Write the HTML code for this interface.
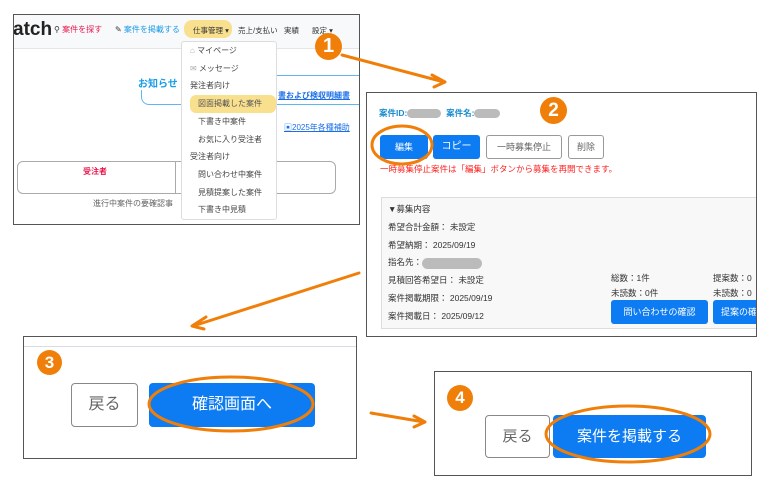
<!DOCTYPE html>
<html><head><meta charset="utf-8"><style>
*{margin:0;padding:0;box-sizing:border-box}
body{width:770px;height:500px;background:#fff;position:relative;overflow:hidden;font-family:"Liberation Sans","Noto Sans CJK JP",sans-serif;color:#333}
.a{position:absolute;white-space:nowrap}
.p{position:absolute;border:1px solid #555;background:#fff;overflow:hidden}
.btn{position:absolute;border-radius:3px;text-align:center;white-space:nowrap}
.blue{background:#0d7bf2;color:#fff}
.gray{border:1px solid #999;color:#666;background:#fff}
.num{position:absolute;border-radius:50%;background:#f07f0a;color:#fff;font-weight:bold;text-align:center;font-family:"Liberation Sans",sans-serif}
.blur{display:inline-block;background:#bbb;border-radius:6px;vertical-align:middle}
</style></head><body>

<!-- Panel 1 -->
<div class="p" style="left:13px;top:14px;width:347px;height:211px">
  <div class="a" style="left:0;top:0;width:347px;height:34px;background:#f8f9fa;border-bottom:1px solid #e5e5e5"></div>
  <div class="a" style="left:-1px;top:4px;font-size:19px;font-weight:bold;color:#222">atch</div>
  <div class="a" style="left:40px;top:9px;font-size:8px;color:#e8194f"><span style="color:#333">&#9906;</span> 案件を探す</div>
  <div class="a" style="left:101px;top:9px;font-size:8px;color:#1a9ce8"><span style="color:#333">&#9998;</span> 案件を掲載する</div>
  <div class="a" style="left:170px;top:5px;width:48px;height:18px;background:#f9e08e;border-radius:8px"></div>
  <div class="a" style="left:179px;top:10px;font-size:7.5px;color:#333">仕事管理 ▾</div>
  <div class="a" style="left:224px;top:10px;font-size:7.5px">売上/支払い</div>
  <div class="a" style="left:270px;top:10px;font-size:7.5px">実績</div>
  <div class="a" style="left:298px;top:10px;font-size:7.5px">設定 ▾</div>
  <div class="a" style="left:127px;top:60px;width:230px;height:30px;border:1px solid #5fb7f2;border-radius:8px"></div>
  <div class="a" style="left:121px;top:60px;font-size:10px;font-weight:bold;color:#1a9ce8;background:#fff;padding:0 3px">お知らせ</div>
  <div class="a" style="left:264px;top:75px;font-size:8px;color:#1a6ee8;text-decoration:underline;font-weight:bold">書および検収明細書</div>
  <div class="a" style="left:270px;top:107px;font-size:8px;color:#1a6ee8;text-decoration:underline">&#9635;2025年各種補助</div>
  <div class="a" style="left:3px;top:146px;width:319px;height:33px;border:1px solid #aaa;border-radius:6px"></div>
  <div class="a" style="left:161px;top:146px;width:1px;height:33px;background:#aaa"></div>
  <div class="a" style="left:69px;top:151px;font-size:8px;font-weight:bold;color:#e8194f">受注者</div>
  <div class="a" style="left:79px;top:183px;font-size:8px;color:#666">進行中案件の要確認事</div>
  <!-- dropdown -->
  <div class="a" style="left:167px;top:26px;width:96px;height:179px;background:#fff;border:1px solid #ddd;border-radius:3px;font-size:8px;color:#444;line-height:17.7px">
    <div style="padding-left:8px"><span style="color:#aaa">&#8962;</span> マイページ</div>
    <div style="padding-left:8px"><span style="color:#aaa">&#9993;</span> メッセージ</div>
    <div style="padding-left:8px">発注者向け</div>
    <div style="margin-left:8px;width:86px;background:#f9e08e;border-radius:6px;padding-left:8px;color:#555">図面掲載した案件</div>
    <div style="padding-left:16px">下書き中案件</div>
    <div style="padding-left:16px">お気に入り受注者</div>
    <div style="padding-left:8px">受注者向け</div>
    <div style="padding-left:16px">問い合わせ中案件</div>
    <div style="padding-left:16px">見積提案した案件</div>
    <div style="padding-left:16px">下書き中見積</div>
  </div>
</div>

<!-- Panel 2 -->
<div class="p" style="left:366px;top:92px;width:391px;height:245px;background:#fff">
  <div class="a" style="left:12px;top:14px;font-size:8.5px;font-weight:bold;color:#1a8dd0">案件ID:<span class="blur" style="width:34px;height:9px"></span>&nbsp; 案件名:<span class="blur" style="width:26px;height:9px"></span></div>
  <div class="btn blue" style="left:13px;top:42px;width:48px;height:24px;line-height:24px;font-size:9px">編集</div>
  <div class="btn blue" style="left:66px;top:42px;width:47px;height:24px;line-height:24px;font-size:10px">コピー</div>
  <div class="btn gray" style="left:119px;top:42px;width:76px;height:24px;line-height:22px;font-size:9px">一時募集停止</div>
  <div class="btn gray" style="left:201px;top:42px;width:36px;height:24px;line-height:22px;font-size:9px">削除</div>
  <div class="a" style="left:13px;top:70px;font-size:8.5px;color:#f22">一時募集停止案件は「編集」ボタンから募集を再開できます。</div>
  <div class="a" style="left:14px;top:104px;width:380px;height:132px;border:1px solid #ddd;background:#f8f8f8;font-size:8.5px;line-height:17.8px;color:#333;padding:3px 0 0 6px">
    <div>▼募集内容</div>
    <div>希望合計金額： 未設定</div>
    <div>希望納期： 2025/09/19</div>
    <div>指名先：<span class="blur" style="width:60px;height:11px;border-radius:6px"></span></div>
    <div>見積回答希望日： 未設定</div>
    <div>案件掲載期限： 2025/09/19</div>
    <div>案件掲載日： 2025/09/12</div>
  </div>
  <div class="a" style="left:244px;top:178px;font-size:8.5px;line-height:15px">総数：1件<br>未読数：0件</div>
  <div class="a" style="left:346px;top:178px;font-size:8.5px;line-height:15px">提案数：0<br>未読数：0</div>
  <div class="btn blue" style="left:244px;top:207px;width:97px;height:24px;line-height:24px;font-size:9px">問い合わせの確認</div>
  <div class="btn blue" style="left:346px;top:207px;width:60px;height:24px;line-height:24px;font-size:9px;text-align:left;padding-left:8px">提案の確</div>
</div>

<!-- Panel 3 -->
<div class="p" style="left:23px;top:336px;width:334px;height:123px">
  <div class="a" style="left:0;top:9px;width:334px;height:1px;background:#d8dde3"></div>
  <div class="btn gray" style="left:47px;top:46px;width:67px;height:44px;line-height:42px;font-size:16px;border-radius:4px;border-color:#888">戻る</div>
  <div class="btn blue" style="left:125px;top:46px;width:166px;height:44px;line-height:44px;font-size:16px;border-radius:4px">確認画面へ</div>
</div>

<!-- Panel 4 -->
<div class="p" style="left:434px;top:371px;width:318px;height:105px">
  <div class="btn gray" style="left:50px;top:43px;width:65px;height:43px;line-height:41px;font-size:15px;border-radius:4px;border-color:#888">戻る</div>
  <div class="btn blue" style="left:118px;top:43px;width:153px;height:43px;line-height:43px;font-size:15px;border-radius:4px">案件を掲載する</div>
</div>

<!-- numbers -->
<div class="num" style="left:315px;top:33px;width:27px;height:27px;line-height:27px;font-size:20px">1</div>
<div class="num" style="left:540px;top:97px;width:27px;height:27px;line-height:27px;font-size:19px">2</div>
<div class="num" style="left:37px;top:350px;width:25px;height:25px;line-height:25px;font-size:17px">3</div>
<div class="num" style="left:447px;top:385px;width:26px;height:26px;line-height:26px;font-size:17px">4</div>

<svg width="770" height="500" style="position:absolute;left:0;top:0" fill="none" stroke="#f07f0a" stroke-width="3" stroke-linecap="round" stroke-linejoin="round">
  <path d="M342 55 L444 82 M432 75 L445 82 L434 87"/>
  <path d="M359 273 L193 326 M206 317 L192 326 L204 329"/>
  <path d="M371 413 L424 422 M414 416 L425 422 L414 427"/>
  <ellipse cx="402" cy="145" rx="30" ry="19"/>
  <ellipse cx="231" cy="404" rx="82" ry="27"/>
  <ellipse cx="628" cy="434" rx="82" ry="28"/>
</svg>
</body></html>
